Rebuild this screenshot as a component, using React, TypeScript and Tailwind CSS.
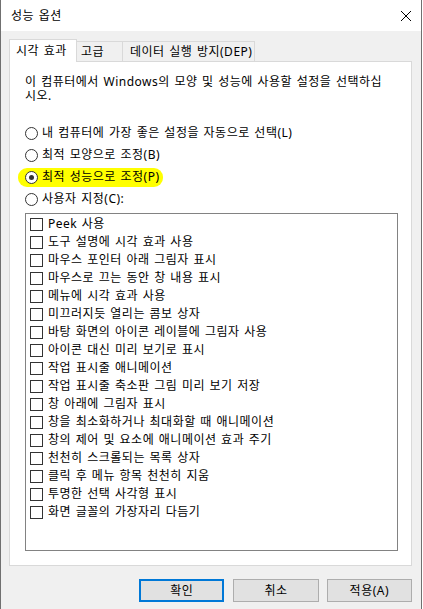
import React from "react";

const effects = [
  "Peek 사용",
  "도구 설명에 시각 효과 사용",
  "마우스 포인터 아래 그림자 표시",
  "마우스로 끄는 동안 창 내용 표시",
  "메뉴에 시각 효과 사용",
  "미끄러지듯 열리는 콤보 상자",
  "바탕 화면의 아이콘 레이블에 그림자 사용",
  "아이콘 대신 미리 보기로 표시",
  "작업 표시줄 애니메이션",
  "작업 표시줄 축소판 그림 미리 보기 저장",
  "창 아래에 그림자 표시",
  "창을 최소화하거나 최대화할 때 애니메이션",
  "창의 제어 및 요소에 애니메이션 효과 주기",
  "천천히 스크롤되는 목록 상자",
  "클릭 후 메뉴 항목 천천히 지움",
  "투명한 선택 사각형 표시",
  "화면 글꼴의 가장자리 다듬기",
];

function Radio({ checked = false }: { checked?: boolean }) {
  return (
    <span className="w-[13px] h-[13px] rounded-full border border-[#333333] bg-white flex items-center justify-center shrink-0">
      {checked && <span className="w-[5px] h-[5px] rounded-full bg-[#333333]" />}
    </span>
  );
}

function Checkbox() {
  return <span className="w-[13px] h-[13px] border border-[#333333] bg-white shrink-0" />;
}

export default function App() {
  return (
    <div className="w-[422px] h-[609px] bg-[#f0f0f0] border-l border-r border-[#707070] flex flex-col text-[12px] text-black font-['Noto_Sans','Noto_Sans_CJK_KR',sans-serif] tracking-[0.5px] [word-spacing:1px]">
      {/* title bar */}
      <div className="h-[31px] bg-white flex items-center pl-[10px] pr-[10px] shrink-0">
        <span>성능 옵션</span>
        <svg className="ml-auto" width="10" height="10" viewBox="0 0 10 10" shapeRendering="crispEdges">
          <path d="M0 0 L10 10 M10 0 L0 10" stroke="#000" strokeWidth="1" fill="none" />
        </svg>
      </div>

      <div className="flex flex-col pl-[8px] pr-[9px] pt-[8px]">
        {/* tabs */}
        <div className="flex items-end h-[22px]">
          <div className="relative z-10 w-[68px] h-[23px] -mb-[1px] bg-white border-l border-t border-r border-[#d9d9d9] flex items-center pl-[6px] pb-[1px] whitespace-nowrap">
            시각 효과
          </div>
          <div className="w-[46px] h-[20px] border-t border-r border-[#d9d9d9] flex items-center pl-[4px] pt-[1px] whitespace-nowrap">
            고급
          </div>
          <div className="w-[132px] h-[20px] border-t border-r border-[#d9d9d9] flex items-center pl-[7px] pt-[1px] whitespace-nowrap">
            데이터 실행 방지(DEP)
          </div>
        </div>

        {/* panel */}
        <div className="bg-white border border-[#d9d9d9] pl-[15px] pr-[13px] pt-[13px] pb-[14px] flex flex-col">
          <p className="leading-[14px] whitespace-nowrap">
            이 컴퓨터에서 Windows의 모양 및 성능에 사용할 설정을 선택하십
            <br />
            시오.
          </p>

          <div className="mt-[19px] flex flex-col">
            <div className="h-[22px] flex items-center gap-[4px]">
              <Radio />
              <span>내 컴퓨터에 가장 좋은 설정을 자동으로 선택(L)</span>
            </div>
            <div className="h-[22px] flex items-center gap-[4px]">
              <Radio />
              <span>최적 모양으로 조정(B)</span>
            </div>
            <div className="h-[22px] flex items-center">
              <span className="h-[19px] -ml-[7px] pl-[7px] pr-[3px] bg-[#ffff00] rounded-[9px] flex items-center gap-[4px]">
                <Radio checked />
                <span>최적 성능으로 조정(P)</span>
              </span>
            </div>
            <div className="h-[22px] flex items-center gap-[4px]">
              <Radio />
              <span>사용자 지정(C):</span>
            </div>
          </div>

          <div className="mt-[3px] h-[338px] border border-[#828282] bg-white pl-[4px] pt-[1px] flex flex-col">
            {effects.map((label) => (
              <div key={label} className="h-[18px] flex items-center gap-[5px] whitespace-nowrap">
                <Checkbox />
                <span>{label}</span>
              </div>
            ))}
          </div>
        </div>

        {/* buttons */}
        <div className="mt-[13px] ml-[130px] flex">
          <button className="w-[86px] h-[23px] bg-[#e1e1e1] border-2 border-[#0078d7] flex items-center justify-center">
            확인
          </button>
          <button className="ml-[9px] w-[86px] h-[23px] bg-[#e1e1e1] border border-[#adadad] flex items-center justify-center">
            취소
          </button>
          <button className="ml-[8px] w-[86px] h-[23px] bg-[#e1e1e1] border border-[#adadad] flex items-center justify-center">
            적용(A)
          </button>
        </div>
      </div>
    </div>
  );
}
